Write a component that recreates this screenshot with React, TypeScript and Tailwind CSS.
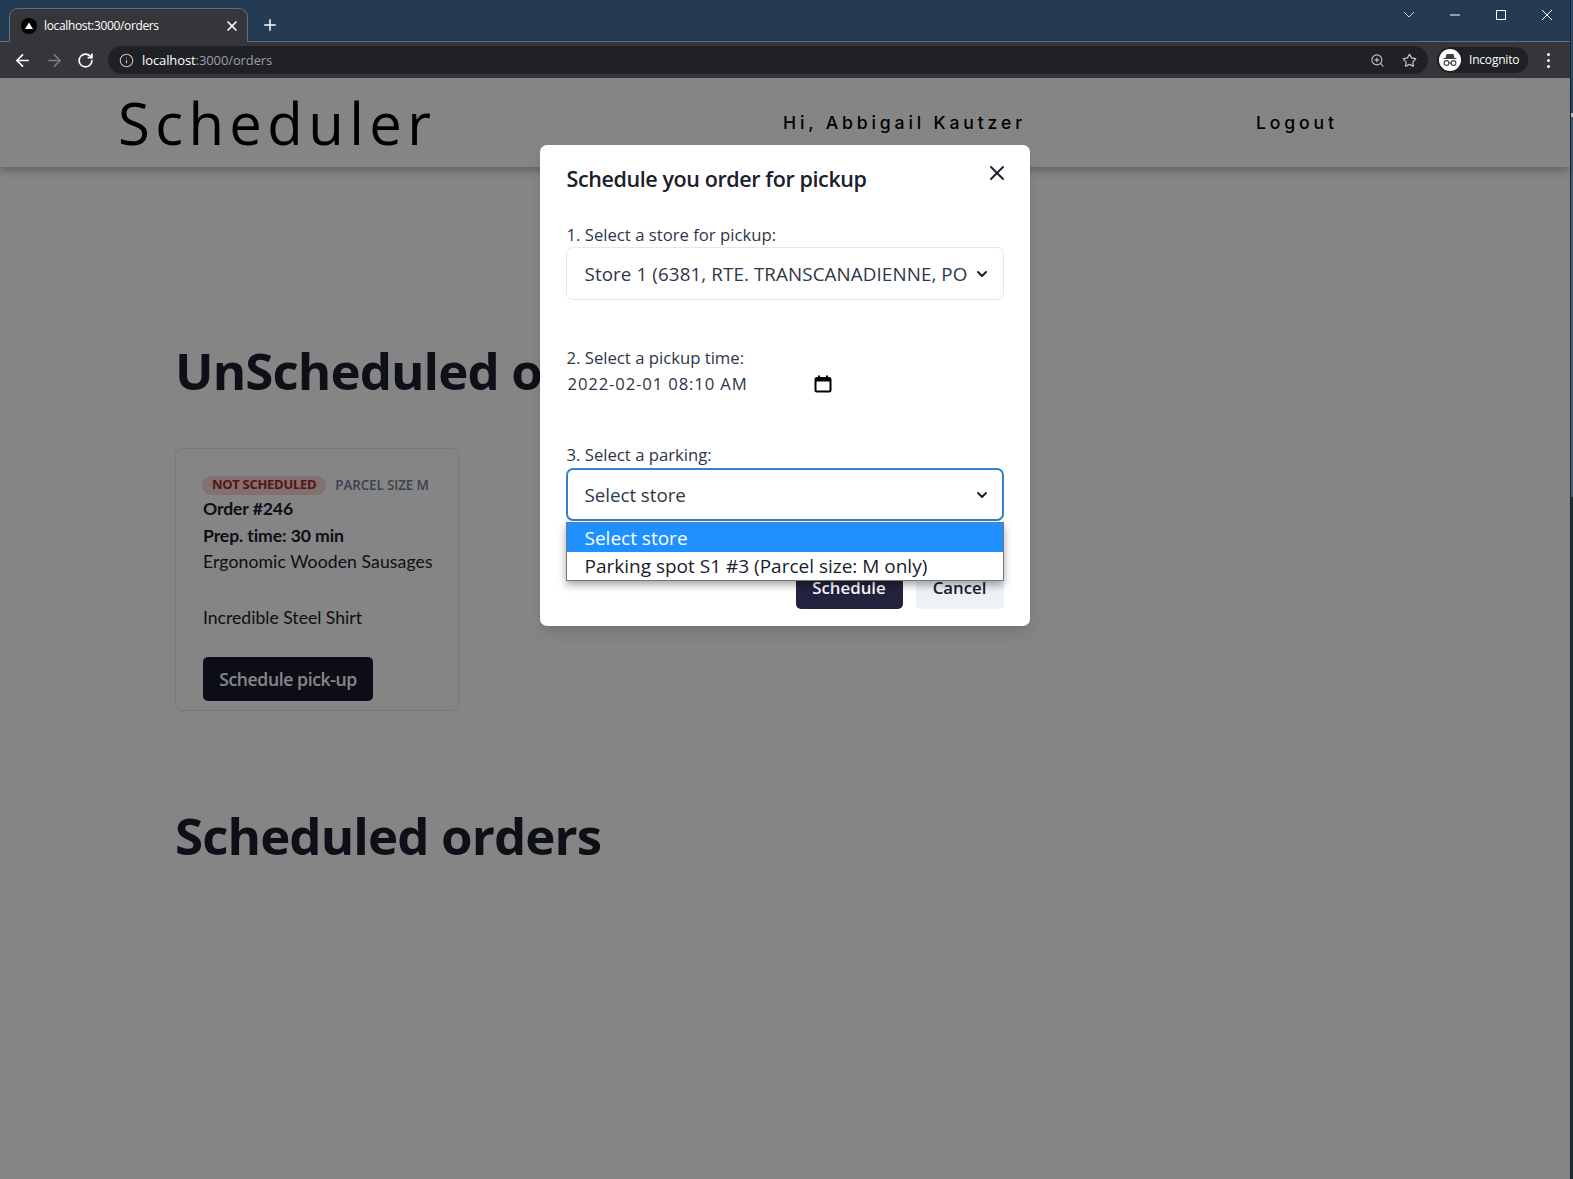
import type { ReactNode } from 'react';
import { ArrowLeft, ArrowRight, ChevronDown, Info, Plus, RotateCw, Star, X, ZoomIn } from 'lucide-react';

const SANS = "font-['Open_Sans','Noto_Sans',sans-serif]";

function SelectBox({ children, focused }: { children: ReactNode; focused?: boolean }) {
  return (
    <div
      className={`flex h-[53px] items-center justify-between rounded-[7px] bg-white text-[18.8px] tracking-[-0.05px] text-[#2d3748] ${
        focused ? 'border-2 border-[#3182ce] pl-[17px] pr-[12px]' : 'border border-[#e2e8f0] pl-[18px] pr-[13px]'
      }`}
    >
      <span className="truncate pt-px">{children}</span>
      <ChevronDown className="ml-1 h-4 w-4 flex-shrink-0 text-[#1a202c]" strokeWidth={3} />
    </div>
  );
}

function BrowserChrome() {
  return (
    <div className="flex-shrink-0 text-white">
      {/* Tab strip */}
      <div className="flex h-[42px] items-end border-b border-[#56718c] bg-[#243b53] pl-[9px]">
        <div className="-mb-px flex h-[34px] w-[239px] items-center rounded-t-[9px] border border-b-0 border-[#56718c] bg-[#35363a] pl-[11px] pr-[7px]">
          <svg viewBox="0 0 16 16" className="h-4 w-4 flex-shrink-0">
            <circle cx="8" cy="8" r="8" fill="#000" />
            <path d="M8 4.5 12 11H4z" fill="#fff" />
          </svg>
          <span className="ml-[7px] flex-1 font-['Open_Sans',sans-serif] text-[12px] tracking-[-0.35px]">localhost:3000/orders</span>
          <X className="h-4 w-4" strokeWidth={2.5} />
        </div>
        <Plus className="mb-[7px] ml-[13px] h-[18px] w-[18px]" strokeWidth={2} />
        <div className="mb-[20px] ml-auto flex items-center gap-[32px] pr-[17px]">
          <svg viewBox="0 0 12 8" className="h-2 w-3" fill="none" stroke="#cbd5e0" strokeWidth="1">
            <path d="M1 1l5 5 5-5" />
          </svg>
          <svg viewBox="0 0 12 12" className="ml-[2px] h-3 w-3" fill="none" stroke="#fff" strokeWidth="1">
            <path d="M1 6h10" />
          </svg>
          <svg viewBox="0 0 12 12" className="ml-[2px] h-3 w-3" fill="none" stroke="#fff" strokeWidth="1">
            <rect x="1.5" y="1.5" width="9" height="9" />
          </svg>
          <svg viewBox="0 0 12 12" className="ml-[2px] h-3 w-3" fill="none" stroke="#fff" strokeWidth="1">
            <path d="M1 1l10 10M11 1 1 11" />
          </svg>
        </div>
      </div>
      {/* Toolbar */}
      <div className="flex h-[36px] items-center bg-[#35363a] pl-[13px] pr-[15px]">
        <ArrowLeft className="h-[19px] w-[19px]" strokeWidth={2.2} />
        <ArrowRight className="ml-[13px] h-[19px] w-[19px] text-[#7b7c7f]" strokeWidth={2.2} />
        <RotateCw className="ml-[13px] h-[17px] w-[17px]" strokeWidth={2.4} />
        <div className="ml-[14px] flex h-7 w-[1320px] items-center rounded-full bg-[#202124] pl-[11px] pr-[11px]">
          <Info className="h-[15px] w-[15px] text-[#c0c1c4]" strokeWidth={1.8} />
          <span className="ml-2 pt-px font-['Open_Sans',sans-serif] text-[13px] tracking-[-0.1px]">
            localhost<span className="text-[#9aa0a6]">:3000/orders</span>
          </span>
          <ZoomIn className="ml-auto h-[15px] w-[15px] text-[#c0c1c4]" strokeWidth={1.8} />
          <Star className="ml-[17px] h-[15px] w-[15px] text-[#c0c1c4]" strokeWidth={2} />
        </div>
        <div className="ml-[9px] flex h-[26px] w-[91px] items-center rounded-full bg-[#202124] pl-[2px]">
          <svg viewBox="0 0 22 22" className="h-[22px] w-[22px] flex-shrink-0">
            <circle cx="11" cy="11" r="11" fill="#fff" />
            <path d="M7.5 5h7l1 4h2v1h-13v-1h2z" fill="#3c4043" />
            <circle cx="7.5" cy="14" r="2.4" fill="none" stroke="#3c4043" strokeWidth="1.1" />
            <circle cx="14.5" cy="14" r="2.4" fill="none" stroke="#3c4043" strokeWidth="1.1" />
            <path d="M9.9 14h2.2" stroke="#3c4043" strokeWidth="1.1" />
          </svg>
          <span className="ml-2 font-['Open_Sans',sans-serif] text-[12px] tracking-[-0.2px]">Incognito</span>
        </div>
        <div className="ml-auto flex flex-col gap-[3px] pr-[5px]">
          <span className="h-[3px] w-[3px] rounded-full bg-white" />
          <span className="h-[3px] w-[3px] rounded-full bg-white" />
          <span className="h-[3px] w-[3px] rounded-full bg-white" />
        </div>
      </div>
    </div>
  );
}

function OrderCard() {
  return (
    <div className="mt-[46px] w-[284px] rounded-[7px] border border-[#e2e8f0] px-[27px] pb-[9px] pt-[26px] font-['Lato',sans-serif] text-[17.6px] text-[#1a202c]">
      <div className="flex items-center whitespace-nowrap">
        <span className="-ml-px flex h-[19px] items-center rounded-full bg-[#fed7d7] px-[10px] font-['Open_Sans',sans-serif] text-[13px] font-bold tracking-[-0.3px] text-[#9b2c2c]">
          NOT SCHEDULED
        </span>
        <span className="ml-[9px] font-['Open_Sans',sans-serif] text-[13.4px] font-semibold tracking-[-0.1px] text-[#718096]">PARCEL SIZE M</span>
      </div>
      <p className="mt-px font-bold leading-[26.4px] tracking-[-0.1px]">Order #246</p>
      <p className="font-bold leading-[26.4px] tracking-[-0.1px]">Prep. time: 30 min</p>
      <p className="whitespace-nowrap leading-[26.4px] tracking-[0.1px]">Ergonomic Wooden Sausages</p>
      <p className="mt-[30px] leading-[26.4px]">Incredible Steel Shirt</p>
      <button className={`mt-[25px] flex h-[44px] w-[170px] items-center justify-center rounded-[5px] bg-[#1a1a2e] pt-px ${SANS} text-[17.6px] font-semibold tracking-[-0.4px] text-white`}>
        Schedule pick-up
      </button>
    </div>
  );
}

function ScheduleModal() {
  return (
    <div className={`relative mt-[67px] h-[481px] w-[490px] rounded-[7px] bg-white px-[26px] pt-[18px] text-[16.7px] text-[#2d3748] shadow-lg ${SANS}`}>
      <div className="flex items-start justify-between pl-px">
        <h2 className="text-[21.5px] font-semibold leading-[32px] tracking-[-0.4px] text-[#1a202c]">Schedule you order for pickup</h2>
        <X className="-mr-[5px] -mt-[2px] h-[24px] w-[24px] text-[#1a202c]" strokeWidth={2} />
      </div>

      <p className="mt-[27px] pl-px leading-[26px]">1. Select a store for pickup:</p>
      <div className="-mt-px">
        <SelectBox>
          <span className="tracking-[0.1px]">Store 1 (6381, RTE. TRANSCANADIENNE, PO</span>
        </SelectBox>
      </div>

      <p className="mt-[45px] pl-px leading-[26px]">2. Select a pickup time:</p>
      <div className="flex h-[26px] w-[266px] items-center justify-between pl-[2px]">
        <span className="tracking-[0.85px]">2022-02-01 08:10 AM</span>
        <svg viewBox="0 0 18 18" className="h-[18px] w-[18px]" fill="none" stroke="#000" strokeWidth="2">
          <rect x="1.5" y="3" width="15" height="13.5" rx="1.5" />
          <path d="M1.5 5h15" strokeWidth="3" />
          <path d="M5 0.5v2M13 0.5v2" />
        </svg>
      </div>

      <p className="mt-[45px] pl-px leading-[26px]">3. Select a parking:</p>
      <div>
        <SelectBox focused>Select store</SelectBox>
      </div>

      <div className="absolute bottom-[17px] right-[26px] flex gap-[13px] text-[16.8px] font-semibold">
        <button className="flex h-[44px] w-[107px] items-center justify-center rounded-[5px] bg-[#23233f] pt-px text-white">Schedule</button>
        <button className="flex h-[44px] w-[88px] items-center justify-center rounded-[5px] bg-[#edf2f7] pt-px text-[#1a202c]">Cancel</button>
      </div>

      {/* Native select popup */}
      <div className="absolute left-[26px] top-[377px] w-[438px] border border-[#767676] bg-white text-[19px] leading-[28px] text-[#1a202c] shadow-[0_4px_8px_rgba(0,0,0,0.35)]">
        <div className="bg-[#1e90ff] pl-[18px] pt-px text-white">Select store</div>
        <div className="pl-[18px]">Parking spot S1 #3 (Parcel size: M only)</div>
      </div>
    </div>
  );
}

export default function App() {
  return (
    <div className="flex h-screen w-full overflow-hidden bg-white">
      <div className="flex min-w-0 flex-1 flex-col">
        <BrowserChrome />
        <div className="relative flex-1">
          <header className="flex h-[89px] items-center bg-white pl-[118px] shadow-[0_4px_8px_rgba(0,0,0,0.25)]">
            <span className="w-[665px] font-['Open_Sans',sans-serif] text-[58px] font-normal tracking-[5.4px] text-black">Scheduler</span>
            <span className="w-[473px] pt-[2px] font-['Inter',sans-serif] text-[17.6px] font-medium tracking-[3.85px] text-black">Hi, Abbigail Kautzer</span>
            <span className="pt-[2px] font-['Inter',sans-serif] text-[17.6px] font-medium tracking-[3.85px] text-black">Logout</span>
          </header>

          <main className={`pl-[175px] pt-[171px] ${SANS}`}>
            <h1 className="text-[51px] font-bold leading-[64px] tracking-[-0.9px] text-[#1a202c]">UnScheduled orders</h1>
            <OrderCard />
            <h1 className="mt-[92px] text-[51px] font-bold leading-[64px] tracking-[-0.9px] text-[#1a202c]">Scheduled orders</h1>
          </main>

          {/* Modal overlay */}
          <div className="absolute inset-0 flex justify-center bg-[rgba(0,0,0,0.48)] pr-[1px]">
            <ScheduleModal />
          </div>
        </div>
      </div>

      {/* Sliver of the desktop behind the browser window */}
      <div className="flex w-[3px] flex-shrink-0 flex-col border-l border-[#16242e]">
        <div className="h-[113px] bg-[#2d4c66]" />
        <div className="h-[4px] bg-[#c5d5dd]" />
        <div className="h-[380px] bg-[#3d5f7a]" />
        <div className="flex-1 bg-[#1a2f38]" />
      </div>
    </div>
  );
}
